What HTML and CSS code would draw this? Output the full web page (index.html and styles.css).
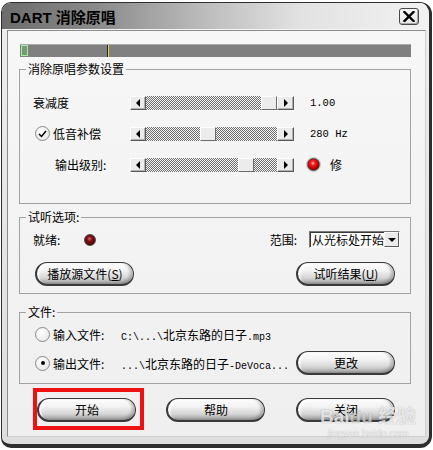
FILE: index.html
```html
<!DOCTYPE html>
<html lang="zh-CN">
<head>
    <meta charset="UTF-8">
    <title>DART 消除原唱</title>
    <link rel="stylesheet" href="styles.css">
</head>
<body>

    <div class="window">
        <div class="titlebar">
            <span class="title">DART 消除原唱</span>
            <span class="close">
                <svg width="12" height="11" viewBox="0 0 12 11"><path d="M1.5 1 L10.5 10 M10.5 1 L1.5 10" stroke="#000" stroke-width="2.4" stroke-linecap="square"/></svg>
            </span>
        </div>

        <div class="client">
            <div class="meter">
                <span class="meter-level"></span>
                <span class="meter-mark"></span>
            </div>

            <fieldset class="group params">
                <legend>消除原唱参数设置</legend>
                <div class="prow">
                    <div class="plabel">衰减度</div>
                    <div class="slider">
                        <span class="arrow-btn left"></span>
                        <span class="track">
                            <span class="fill" style="width:115px"></span>
                            <span class="thumb"></span>
                            <span class="fill rest"></span>
                        </span>
                        <span class="arrow-btn right"></span>
                    </div>
                    <span class="value">1.00</span>
                </div>
                <div class="prow">
                    <div class="plabel">
                        <span class="radio check">
                            <svg width="9" height="8" viewBox="0 0 9 8"><path d="M1 4 L3.5 6.5 L8 1" fill="none" stroke="#000" stroke-width="1.5"/></svg>
                        </span>
                        <span class="radio-text">低音补偿</span>
                    </div>
                    <div class="slider">
                        <span class="arrow-btn left"></span>
                        <span class="track">
                            <span class="fill" style="width:54px"></span>
                            <span class="thumb"></span>
                            <span class="fill rest"></span>
                        </span>
                        <span class="arrow-btn right"></span>
                    </div>
                    <span class="value">280 Hz</span>
                </div>
                <div class="prow">
                    <div class="plabel indent">输出级别:</div>
                    <div class="slider">
                        <span class="arrow-btn left"></span>
                        <span class="track">
                            <span class="fill" style="width:92px"></span>
                            <span class="thumb"></span>
                            <span class="fill rest"></span>
                        </span>
                        <span class="arrow-btn right"></span>
                    </div>
                    <span class="led on"></span>
                    <span class="led-text">修</span>
                </div>
            </fieldset>

            <fieldset class="group listen">
                <legend>试听选项:</legend>
                <div class="listen-row">
                    <span class="ready">就绪:</span>
                    <span class="led off"></span>
                    <span class="range">范围:</span>
                    <div class="select">
                        <span class="select-text">从光标处开始</span>
                        <span class="select-btn"></span>
                    </div>
                </div>
                <div class="listen-buttons">
                    <button class="pill">播放源文件(<u>S</u>)</button>
                    <button class="pill">试听结果(<u>U</u>)</button>
                </div>
            </fieldset>

            <fieldset class="group files">
                <legend>文件:</legend>
                <div class="file-row">
                    <span class="radio"></span>
                    <span class="file-label">输入文件:</span>
                    <span class="path"><span class="mono">C:\...\</span>北京东路的日子<span class="mono">.mp3</span></span>
                </div>
                <div class="file-row second">
                    <span class="radio dot"></span>
                    <span class="file-label">输出文件:</span>
                    <span class="path"><span class="mono">...\</span>北京东路的日子<span class="mono">-DeVoca...</span></span>
                    <button class="pill change">更改</button>
                </div>
            </fieldset>

            <div class="actions">
                <span class="mark"><button class="pill">开始</button></span>
                <button class="pill help">帮助</button>
                <button class="pill close-btn">关闭</button>
            </div>
        </div>

        <div class="watermark">
            <span class="wm-logo">Bai<span class="wm-du">du</span> 经验</span>
            <span class="wm-url">jingyan.baidu.com</span>
        </div>
    </div>

</body>
</html>
```

FILE: styles.css
```css
* {
    box-sizing: border-box;
}
body {
    margin: 0;
    padding: 0;
    background: #fff;
    font-family: "Noto Sans CJK SC", "Liberation Sans", sans-serif;
    font-size: 12px;
    color: #000;
}
.window {
    position: relative;
    width: 431px;
    height: 446px;
    margin: 2px 0 0 1px;
    display: flex;
    flex-direction: column;
    border: 1px solid #2e2e2e;
    border-right-width: 3px;
    border-bottom-width: 4px;
    border-radius: 10px 12px 12px 10px;
    background: linear-gradient(#ededed, #dedede);
    overflow: hidden;
}
.titlebar {
    height: 27px;
    display: flex;
    align-items: center;
    padding: 0 10px 0 8px;
    background: linear-gradient(90deg, #6c6c6c 0%, #8a8a8a 22%, #bdbdbd 48%, #e2e2e2 70%, #f2f2f2 100%);
    border-bottom: 1px solid #f4f4f4;
}
.title {
    font-family: "Liberation Sans", "Noto Sans CJK SC", sans-serif;
    font-weight: bold;
    font-size: 15px;
    margin-top: 1px;
}
.close {
    margin-left: auto;
    width: 20px;
    height: 17px;
    display: flex;
    align-items: center;
    justify-content: center;
    border: 1px solid #4a4a4a;
    border-radius: 3px;
    background: linear-gradient(#fafafa, #e4e4e4);
    box-shadow: inset -1px -1px 0 #aaa;
}

/* client area */
.client {
    flex: 1;
    margin: 0 3px 7px 5px;
    border: 1px solid #8c8c8c;
    border-right-color: #d0d0d0;
    border-bottom-color: #d0d0d0;
    background: linear-gradient(#f7f7f7, #efefef);
    display: flex;
    flex-direction: column;
}
.meter {
    position: relative;
    height: 13px;
    margin: 13px 14px 0 12px;
    background: #808080;
    border-top: 1px solid #a8a8a8;
}
.meter-level {
    position: absolute;
    left: 1px;
    top: 0;
    width: 7px;
    height: 11px;
    background: #7a9a7a;
    border: 1px solid #9ef09e;
}
.meter-mark {
    position: absolute;
    left: 87px;
    top: 0;
    width: 2px;
    height: 12px;
    background: #e8d84a;
    border-left: 1px solid #222;
}

/* groups */
.group {
    margin: 0 14px 0 11px;
    padding: 0;
    border: 1px solid #a2a2a2;
    min-inline-size: 0;
}
.group legend {
    margin-left: 6px;
    padding: 0 2px;
    font-size: 12px;
    line-height: 14px;
}
.params {
    margin-top: 5px;
    padding: 11px 0 23px;
}
.listen {
    margin-top: 6px;
    padding: 7px 0 7px;
}
.files {
    margin-top: 11px;
    padding: 5px 0 8px;
}

/* parameter rows */
.prow {
    display: flex;
    align-items: center;
    height: 31px;
    padding-left: 13px;
}
.plabel {
    width: 97px;
    display: flex;
    align-items: center;
}
.plabel.indent {
    padding-left: 22px;
}
.plabel .radio {
    margin-left: 2px;
}
.radio-text {
    margin-left: 3px;
}
.slider {
    display: flex;
    width: 164px;
    height: 14px;
}
.arrow-btn {
    width: 16px;
    height: 14px;
    display: flex;
    align-items: center;
    justify-content: center;
    background: #ebebeb;
    border: 1px solid;
    border-color: #fff #5a5a5a #5a5a5a #fff;
    box-shadow: inset -1px -1px 0 #b0b0b0;
}
.arrow-btn.right {
    width: 17px;
}
.arrow-btn::before {
    content: "";
    border-top: 4px solid transparent;
    border-bottom: 4px solid transparent;
}
.arrow-btn.left::before {
    border-right: 4px solid #000;
}
.arrow-btn.right::before {
    border-left: 4px solid #000;
}
.track {
    flex: 1;
    display: flex;
}
.fill {
    height: 14px;
    background: repeating-conic-gradient(#6e6e6e 0 25%, #f4f4f4 0 50%) 0 0 / 2px 2px;
}
.fill.rest {
    flex: 1;
}
.thumb {
    width: 16px;
    height: 14px;
    background: #ececec;
    border: 1px solid;
    border-color: #fff #6a6a6a #6a6a6a #fff;
}
.value {
    margin-left: 16px;
    font-family: "Liberation Mono", monospace;
    font-size: 10.5px;
}
.led {
    width: 13px;
    height: 13px;
    border-radius: 50%;
    border: 1px solid #4a4a4a;
}
.led.on {
    margin-left: 13px;
    background: radial-gradient(circle at 45% 38%, #ffd0d0 0, #ff2020 22%, #c00000 55%, #500000 100%);
    box-shadow: 0 0 0 1px #c8c8c8;
}
.led.off {
    margin-left: 0;
    width: 12px;
    height: 12px;
    background: radial-gradient(circle at 45% 38%, #d07070 0, #801010 30%, #3a0000 100%);
}
.led-text {
    margin-left: 10px;
}

/* radios */
.radio {
    width: 15px;
    height: 15px;
    flex: none;
    border-radius: 50%;
    border: 1px solid #8a8a8a;
    background: radial-gradient(circle at 40% 35%, #ffffff, #e2e2e2);
    display: inline-flex;
    align-items: center;
    justify-content: center;
}
.radio.dot::after {
    content: "";
    width: 4px;
    height: 4px;
    border-radius: 50%;
    background: #000;
}

/* listen group */
.listen-row {
    display: flex;
    align-items: center;
    height: 17px;
    padding: 0 10px 0 13px;
}
.ready {
    width: 51px;
}
.range {
    margin-left: auto;
}
.select {
    width: 91px;
    height: 17px;
    margin-left: 12px;
    display: flex;
    background: #fff;
    border: 1px solid;
    border-color: #7a7a7a #fff #fff #7a7a7a;
    box-shadow: inset 1px 1px 0 #3a3a3a;
}
.select-text {
    flex: 1;
    padding-left: 2px;
    font-size: 12px;
    line-height: 15px;
    white-space: nowrap;
}
.select-btn {
    width: 15px;
    flex: none;
    display: flex;
    align-items: center;
    justify-content: center;
    background: #ebebeb;
    border: 1px solid;
    border-color: #fff #5a5a5a #5a5a5a #fff;
}
.select-btn::before {
    content: "";
    border-left: 4px solid transparent;
    border-right: 4px solid transparent;
    border-top: 4px solid #000;
}
.listen-buttons {
    display: flex;
    justify-content: space-between;
    margin-top: 14px;
    padding: 0 15px;
}

/* pill buttons */
.pill {
    width: 99px;
    height: 24px;
    padding: 0;
    border: 1px solid #3a3a3a;
    border-left-width: 2px;
    border-bottom-width: 2px;
    border-radius: 12px;
    background: linear-gradient(#fdfdfd 0%, #f3f3f3 35%, #d6d6d6 70%, #a2a2a2 100%);
    box-shadow: inset -3px -1px 3px rgba(0, 0, 0, 0.22), inset 2px 2px 2px rgba(255, 255, 255, 0.9);
    font-family: "Noto Sans CJK SC", "Liberation Sans", sans-serif;
    font-size: 12px;
    color: #000;
    line-height: 20px;
}
.pill u {
    text-underline-offset: 1px;
}

/* files group */
.file-row {
    display: flex;
    align-items: center;
    height: 20px;
    padding: 0 15px;
}
.file-row.second {
    height: 24px;
    margin-top: 7px;
}
.file-label {
    width: 68px;
    margin-left: 3px;
}
.path {
    white-space: nowrap;
}
.mono {
    font-family: "Liberation Mono", monospace;
    font-size: 10px;
}
.change {
    margin-left: auto;
}

/* bottom buttons */
.actions {
    display: flex;
    align-items: flex-start;
    margin-top: 4px;
    padding-left: 25px;
}
.mark {
    display: flex;
    padding: 6px 4px 4px 0;
    border: 4px solid #ee1111;
}
.help {
    margin: 10px 0 0 22px;
}
.close-btn {
    margin: 10px 0 0 31px;
}

/* watermark */
.watermark {
    position: absolute;
    left: 318px;
    top: 398px;
    display: flex;
    flex-direction: column;
    align-items: center;
    pointer-events: none;
}
.wm-logo {
    font-family: "Liberation Sans", "Noto Sans CJK SC", sans-serif;
    font-weight: bold;
    font-size: 19px;
    color: rgba(255, 255, 255, 0.75);
    text-shadow: 0 0 1px rgba(0, 0, 0, 0.35);
}
.wm-du {
    color: rgba(255, 255, 255, 0.6);
}
.wm-url {
    font-family: "Liberation Sans", sans-serif;
    font-size: 10px;
    color: rgba(255, 255, 255, 0.75);
    text-shadow: 0 0 1px rgba(0, 0, 0, 0.3);
}
```
